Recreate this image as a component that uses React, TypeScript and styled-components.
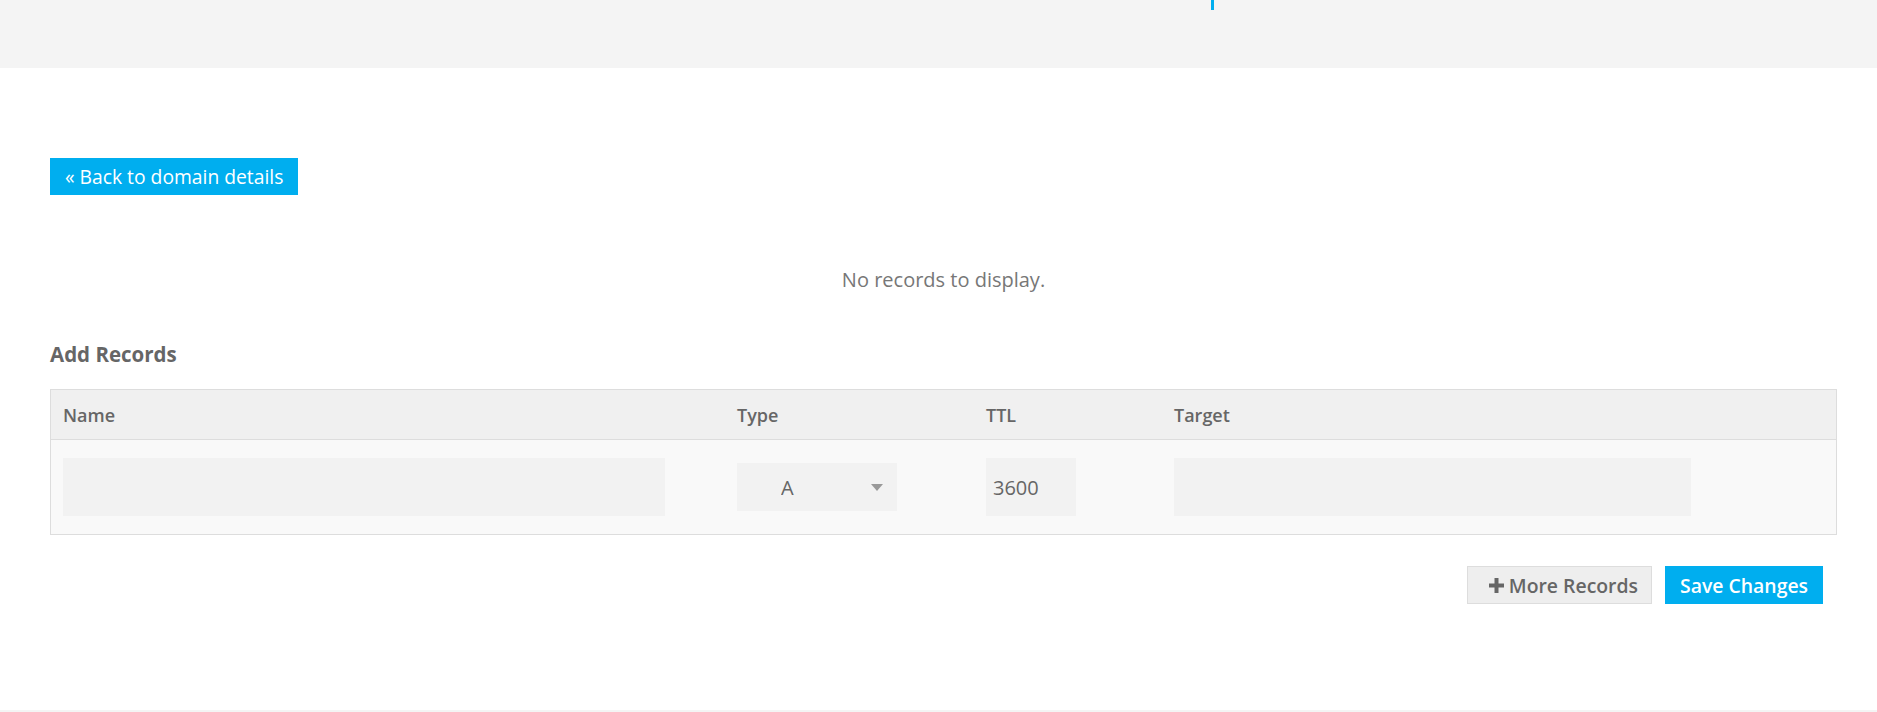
import React from 'react';
import styled, { createGlobalStyle } from 'styled-components';

const GlobalStyle = createGlobalStyle`
    body {
        margin: 0;
        background: #fff;
        font-family: "Open Sans", "Noto Sans", sans-serif;
        color: #666;
    }
`;

const TopBar = styled.header`
    height: 68px;
    background: #f4f4f4;
    display: flex;
    align-items: flex-start;
`;

const TabMarker = styled.span`
    display: block;
    margin-left: 1211px;
    width: 3px;
    height: 10px;
    background: #00aeef;
`;

const Main = styled.main`
    padding: 90px 40px 106px 50px;
`;

const BackButton = styled.a`
    display: inline-block;
    height: 37px;
    line-height: 37px;
    padding: 0 15px;
    background: #00aeef;
    color: #fff;
    font-size: 19.3px;
    text-decoration: none;
    cursor: pointer;
`;

const EmptyNote = styled.p`
    margin: 71px 0 0;
    text-align: center;
    font-size: 20px;
    line-height: 27px;
    color: #777;
`;

const SectionTitle = styled.h3`
    margin: 48px 0 0;
    font-size: 20.5px;
    line-height: 26px;
    font-weight: 700;
    color: #666;
`;

const Table = styled.div`
    margin-top: 22px;
    border: 1px solid #ddd;
`;

const Row = styled.div<{ $head?: boolean }>`
    display: grid;
    grid-template-columns: 674px 249px 188px 1fr;
    align-items: center;
    padding-left: 12px;
    height: ${(p) => (p.$head ? '49px' : '94px')};
    background: ${(p) => (p.$head ? '#f0f0f0' : '#f9f9f9')};
    border-bottom: ${(p) => (p.$head ? '1px solid #ddd' : 'none')};
`;

const HeadCell = styled.div`
    font-size: 18px;
    font-weight: 600;
    color: #666;
`;

const TextField = styled.input<{ $width: number }>`
    box-sizing: border-box;
    width: ${(p) => p.$width}px;
    height: 58px;
    border: none;
    outline: none;
    background: #f2f2f2;
    padding: 0 7px;
    font-family: inherit;
    font-size: 20px;
    color: #666;
`;

const SelectWrap = styled.div`
    position: relative;
    width: 160px;
    height: 48px;
`;

const Select = styled.select`
    appearance: none;
    box-sizing: border-box;
    width: 100%;
    height: 100%;
    border: none;
    outline: none;
    background: #f2f2f2;
    padding: 0 0 0 44px;
    font-family: inherit;
    font-size: 20px;
    color: #666;
`;

const Caret = styled.span`
    position: absolute;
    right: 14px;
    top: 21px;
    width: 0;
    height: 0;
    border-left: 6px solid transparent;
    border-right: 6px solid transparent;
    border-top: 7px solid #999;
    pointer-events: none;
`;

const Actions = styled.div`
    display: flex;
    justify-content: flex-end;
    gap: 13px;
    margin-top: 31px;
    padding-right: 14px;
`;

const Button = styled.button<{ $primary?: boolean }>`
    box-sizing: border-box;
    display: flex;
    align-items: center;
    gap: 5px;
    height: 38px;
    padding: ${(p) => (p.$primary ? '0 15px' : '0 13px 0 21px')};
    border: ${(p) => (p.$primary ? 'none' : '1px solid #ddd')};
    background: ${(p) => (p.$primary ? '#00aeef' : '#eee')};
    color: ${(p) => (p.$primary ? '#fff' : '#666')};
    font-family: inherit;
    font-size: 19.4px;
    font-weight: 600;
    cursor: pointer;
`;

const Footer = styled.footer`
    height: 2px;
    background: #f4f4f4;
`;

const PlusIcon = () => (
    <svg width="15" height="15" viewBox="0 0 15 15">
        <path d="M5.5 0h4v5.5H15v4H9.5V15h-4V9.5H0v-4h5.5z" fill="#666" />
    </svg>
);

const App = () => {
    return (
        <>
            <GlobalStyle />
            <TopBar>
                <TabMarker />
            </TopBar>
            <Main>
                <BackButton>« Back to domain details</BackButton>
                <EmptyNote>No records to display.</EmptyNote>
                <SectionTitle>Add Records</SectionTitle>
                <Table>
                    <Row $head>
                        <HeadCell>Name</HeadCell>
                        <HeadCell>Type</HeadCell>
                        <HeadCell>TTL</HeadCell>
                        <HeadCell>Target</HeadCell>
                    </Row>
                    <Row>
                        <div>
                            <TextField $width={602} />
                        </div>
                        <div>
                            <SelectWrap>
                                <Select defaultValue="A">
                                    <option>A</option>
                                    <option>AAAA</option>
                                    <option>CNAME</option>
                                    <option>MX</option>
                                    <option>TXT</option>
                                </Select>
                                <Caret />
                            </SelectWrap>
                        </div>
                        <div>
                            <TextField $width={90} defaultValue="3600" />
                        </div>
                        <div>
                            <TextField $width={517} />
                        </div>
                    </Row>
                </Table>
                <Actions>
                    <Button>
                        <PlusIcon />
                        More Records
                    </Button>
                    <Button $primary>Save Changes</Button>
                </Actions>
            </Main>
            <Footer />
        </>
    );
};

export default App;
